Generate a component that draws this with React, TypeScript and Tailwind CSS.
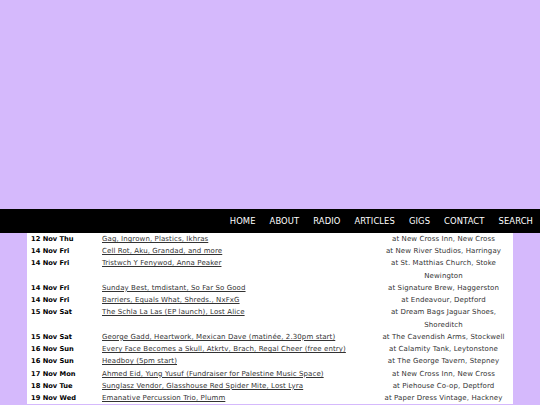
import React from "react";

type Gig = { date: string; event: string; venue: string };

const gigs: Gig[] = [
  { date: "12 Nov Thu", event: "Gag, Ingrown, Plastics, Ikhras", venue: "at New Cross Inn, New Cross" },
  { date: "14 Nov Fri", event: "Cell Rot, Aku, Grandad, and more", venue: "at New River Studios, Harringay" },
  { date: "14 Nov Fri", event: "Tristwch Y Fenywod, Anna Peaker", venue: "at St. Matthias Church, Stoke Newington" },
  { date: "14 Nov Fri", event: "Sunday Best, tmdistant, So Far So Good", venue: "at Signature Brew, Haggerston" },
  { date: "14 Nov Fri", event: "Barriers, Equals What, Shreds., NxFxG", venue: "at Endeavour, Deptford" },
  { date: "15 Nov Sat", event: "The Schla La Las (EP launch), Lost Alice", venue: "at Dream Bags Jaguar Shoes, Shoreditch" },
  { date: "15 Nov Sat", event: "George Gadd, Heartwork, Mexican Dave (matinée, 2.30pm start)", venue: "at The Cavendish Arms, Stockwell" },
  { date: "16 Nov Sun", event: "Every Face Becomes a Skull, Atkrtv, Brach, Regal Cheer (free entry)", venue: "at Calamity Tank, Leytonstone" },
  { date: "16 Nov Sun", event: "Headboy (5pm start)", venue: "at The George Tavern, Stepney" },
  { date: "17 Nov Mon", event: "Ahmed Eid, Yung Yusuf (Fundraiser for Palestine Music Space)", venue: "at New Cross Inn, New Cross" },
  { date: "18 Nov Tue", event: "Sunglasz Vendor, Glasshouse Red Spider Mite, Lost Lyra", venue: "at Piehouse Co-op, Deptford" },
  { date: "19 Nov Wed", event: "Emanative Percussion Trio, Plumm", venue: "at Paper Dress Vintage, Hackney" },
];

const nav = ["HOME", "ABOUT", "RADIO", "ARTICLES", "GIGS", "CONTACT", "SEARCH"];

export default function App() {
  return (
    <div className="w-[540px] h-[405px] overflow-hidden bg-[#d5b9fc] flex flex-col" style={{ fontFamily: '"DejaVu Sans", Verdana, sans-serif' }}>
      <div className="h-[209px] shrink-0" />
      <nav className="h-[24px] shrink-0 bg-black flex items-center justify-end pr-[7px] gap-[14px]">
        {nav.map((n) => (
          <a key={n} className="text-white text-[8.4px] leading-none tracking-[0.1px]">
            {n}
          </a>
        ))}
      </nav>
      <div className="mx-[27px] w-[486px] bg-white pl-[4px] pr-[5px]">
        <div className="grid grid-cols-[71px_277px_129px] text-[7px] tracking-[0.1px] leading-[12.23px] text-[#333]">
          {gigs.map((g, i) => (
            <React.Fragment key={i}>
              <div className="font-bold text-black text-[6.7px] tracking-normal">{g.date}</div>
              <div>
                <a className="underline text-[#333]">{g.event}</a>
              </div>
              <div className="text-center">{g.venue}</div>
            </React.Fragment>
          ))}
        </div>
      </div>
    </div>
  );
}
